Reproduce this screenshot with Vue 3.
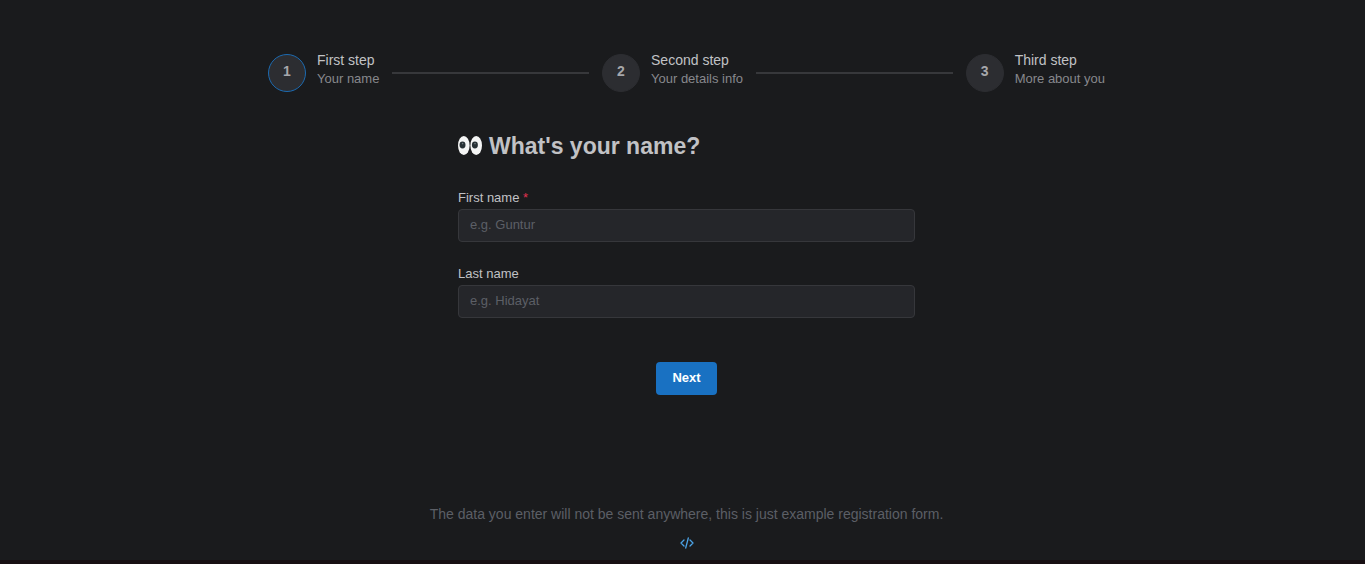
<script setup>
import { ref } from 'vue'

const steps = [
  { title: 'First step', description: 'Your name' },
  { title: 'Second step', description: 'Your details info' },
  { title: 'Third step', description: 'More about you' },
]
const active = ref(0)
const firstName = ref('')
const lastName = ref('')
</script>

<template>
  <main class="page">
    <ol class="stepper">
      <template v-for="(step, index) in steps" :key="step.title">
        <li class="step">
          <span class="step-icon" :class="{ active: index === active }">{{ index + 1 }}</span>
          <span class="step-body">
            <span class="step-title">{{ step.title }}</span>
            <span class="step-description">{{ step.description }}</span>
          </span>
        </li>
        <li v-if="index < steps.length - 1" class="separator" aria-hidden="true"></li>
      </template>
    </ol>

    <form class="form" @submit.prevent>
      <h1 class="heading">
        <svg class="eyes" viewBox="0 0 24 20" aria-hidden="true">
          <ellipse cx="5.8" cy="9.5" rx="5.8" ry="9.4" fill="#f4f5f5" />
          <ellipse cx="18.2" cy="9.5" rx="5.8" ry="9.4" fill="#f4f5f5" />
          <ellipse cx="4.5" cy="9" rx="3" ry="3.4" fill="#263035" />
          <ellipse cx="16.9" cy="9" rx="3" ry="3.4" fill="#263035" />
          <circle cx="4.6" cy="7.6" r="0.8" fill="#6f7c82" />
          <circle cx="17" cy="7.6" r="0.8" fill="#6f7c82" />
        </svg>
        <span>What's your name?</span>
      </h1>

      <div class="field">
        <label for="first-name">First name <span class="required">*</span></label>
        <input id="first-name" v-model="firstName" type="text" placeholder="e.g. Guntur" required />
      </div>
      <div class="field">
        <label for="last-name">Last name</label>
        <input id="last-name" v-model="lastName" type="text" placeholder="e.g. Hidayat" />
      </div>

      <button class="next" type="submit">Next</button>
    </form>

    <footer class="footer">
      <p>The data you enter will not be sent anywhere, this is just example registration form.</p>
      <a href="#" class="source" aria-label="Source code">
        <svg viewBox="0 0 14 12" fill="none" stroke="#4ba3e6" stroke-width="1.3" stroke-linecap="round" stroke-linejoin="round" aria-hidden="true">
          <path d="M4 3 L1 6 L4 9 M10 3 L13 6 L10 9 M8.3 1 L5.7 11" />
        </svg>
      </a>
    </footer>
  </main>
</template>

<style>
html,
body {
  background: #1a1b1d;
}
</style>

<style scoped>
.page {
  box-sizing: border-box;
  min-height: 100vh;
  padding: 50px 16px 11px 24px;
  display: flex;
  flex-direction: column;
  align-items: center;
  background: #1a1b1d;
  border-bottom: 4px solid #180f13;
  color: #c1c2c5;
  font-family: "Liberation Sans", Arial, sans-serif;
}
.stepper {
  width: 100%;
  max-width: 837px;
  margin: 0;
  padding: 0;
  display: flex;
  align-items: center;
  list-style: none;
}
.step {
  display: flex;
  align-items: flex-start;
}
.step-icon {
  box-sizing: border-box;
  width: 38px;
  height: 38px;
  margin-top: 4px;
  border: 1px solid #2c2d31;
  border-radius: 50%;
  background: #2c2d31;
  color: #a6a7ab;
  font-size: 14px;
  font-weight: 700;
  line-height: 32px;
  text-align: center;
}
.step-icon.active {
  border-color: #1c6ab0;
}
.step-body {
  margin-left: 11px;
  display: flex;
  flex-direction: column;
  white-space: nowrap;
}
.step-title {
  font-size: 14px;
  line-height: 20px;
}
.step-description {
  color: #87888c;
  font-size: 13px;
  line-height: 18px;
}
.separator {
  flex: 1;
  height: 2px;
  margin: 4px 13px 0;
  background: #37383b;
}
.form {
  width: 100%;
  max-width: 457px;
  margin-top: 38px;
  display: flex;
  flex-direction: column;
}
.heading {
  margin: 0 0 26px;
  display: flex;
  align-items: center;
  gap: 7px;
  font-size: 23px;
  line-height: 32px;
}
.eyes {
  width: 24px;
  height: 20px;
}
.field {
  margin-bottom: 22px;
  display: flex;
  flex-direction: column;
}
.field label {
  margin-bottom: 1px;
  font-size: 13px;
  line-height: 20px;
}
.required {
  color: #e03150;
}
.field input {
  box-sizing: border-box;
  width: 100%;
  height: 33px;
  padding: 0 11px 2px;
  border: 1px solid #36373b;
  border-radius: 4px;
  outline: none;
  background: #25262a;
  color: #c1c2c5;
  font: 13px "Liberation Sans", Arial, sans-serif;
}
.field input::placeholder {
  color: #5c5f66;
  opacity: 1;
}
.next {
  align-self: center;
  height: 33px;
  margin-top: 22px;
  padding: 0 16px 2px;
  border: 0;
  border-radius: 4px;
  background: #1971c2;
  color: #fff;
  font: 700 13px "Liberation Sans", Arial, sans-serif;
}
.footer {
  margin-top: auto;
  display: flex;
  flex-direction: column;
  align-items: center;
  color: #5c5f66;
  font-size: 14px;
  line-height: 20px;
}
.footer p {
  margin: 0 0 13px;
}
.source {
  display: flex;
}
.source svg {
  width: 14px;
  height: 12px;
}
</style>
